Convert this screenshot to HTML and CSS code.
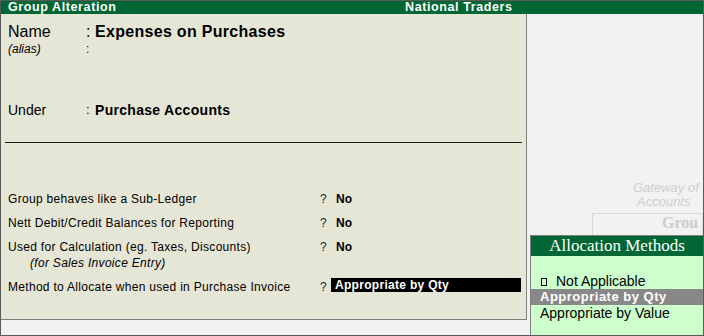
FILE: index.html
```html
<!DOCTYPE html>
<html lang="en">
<head>
  <meta charset="UTF-8" />
  <title>Group Alteration</title>
  <link rel="stylesheet" href="styles.css">
</head>
<body>
  <div class="screen">
    <!-- title bar -->
    <div class="titlebar">
      <span class="title">Group Alteration</span>
      <span class="company">National Traders</span>
    </div>

    <div class="main">
      <!-- group form -->
      <div class="form">
        <div class="field field-name">
          <span class="label">Name</span>
          <span class="colon">:</span>
          <span class="value">Expenses on Purchases</span>
        </div>
        <div class="field field-alias">
          <span class="label">(alias)</span>
          <span class="colon">:</span>
          <span class="value"></span>
        </div>
        <div class="field field-under">
          <span class="label">Under</span>
          <span class="colon">:</span>
          <span class="value">Purchase Accounts</span>
        </div>

        <div class="rule"></div>

        <div class="options">
          <div class="option">
            <span class="opt-label">Group behaves like a Sub-Ledger</span>
            <span class="q">?</span>
            <span class="opt-value">No</span>
          </div>
          <div class="option">
            <span class="opt-label">Nett Debit/Credit Balances for Reporting</span>
            <span class="q">?</span>
            <span class="opt-value">No</span>
          </div>
          <div class="option">
            <span class="opt-label">Used for Calculation (eg. Taxes, Discounts)
              <em class="sub">(for Sales Invoice Entry)</em>
            </span>
            <span class="q">?</span>
            <span class="opt-value">No</span>
          </div>
          <div class="option">
            <span class="opt-label">Method to Allocate when used in Purchase Invoice</span>
            <span class="q">?</span>
            <span class="opt-value active">Appropriate by Qty</span>
          </div>
        </div>
      </div>

      <!-- faded screen behind -->
      <div class="side">
        <div class="ghost ghost-1">Gateway of</div>
        <div class="ghost ghost-2">Accounts</div>
        <div class="ghost-box">Grou</div>
      </div>
    </div>

    <div class="bottom-strip"></div>

    <!-- allocation list popup -->
    <div class="popup">
      <div class="popup-head">Allocation Methods</div>
      <div class="popup-list">
        <div class="item"><span class="box"></span>Not Applicable</div>
        <div class="item selected">Appropriate by Qty</div>
        <div class="item">Appropriate by Value</div>
      </div>
    </div>
  </div>
</body>
</html>
```

FILE: styles.css
```css
/* ===== Tally style screen ===== */
body {
  margin: 0;
  padding: 0;
  font-family: "Liberation Sans", Arial, sans-serif;
  color: #000;
  background-color: #f2f2f2;
}

.screen {
  position: relative;
  width: 704px;
  height: 336px;
  box-sizing: border-box;
  border: 1px solid #5a5a5a;
  background-color: #f2f2f2;
  overflow: hidden;
}

/* title bar */
.titlebar {
  display: flex;
  height: 13px;
  background-color: #006633;
  color: #fff;
  font-weight: bold;
  font-size: 12.5px;
  line-height: 13px;
  letter-spacing: 0.6px;
  white-space: nowrap;
}
.title {
  padding-left: 7px;
  width: 397px;
}

.main {
  display: flex;
  height: 298px;
}

/* form panel */
.form {
  width: 525px;
  height: 297px;
  background-color: #e6e6d6;
  border-right: 1px solid #808080;
  border-bottom: 1px solid #808080;
  padding-top: 8px;
  box-sizing: content-box;
}

.field {
  display: grid;
  grid-template-columns: 78px 9px auto;
  padding-left: 7px;
}
.field .value {
  font-weight: bold;
}
.field-name {
  font-size: 16px;
  line-height: 19px;
}
.field-name .value {
  letter-spacing: 0.3px;
}
.field-alias {
  margin-top: 1px;
  font-size: 12px;
  line-height: 15px;
}
.field-alias .label {
  font-style: italic;
}
.field-under {
  margin-top: 45px;
  font-size: 13px;
  line-height: 16px;
}
.field-under .label {
  font-size: 14px;
}
.field-under .value {
  font-size: 14px;
  letter-spacing: 0.3px;
}

.rule {
  margin: 24px 0 0 4px;
  width: 517px;
  height: 1px;
  background-color: #1a1a1a;
}

.options {
  margin-top: 48px;
  font-size: 12px;
  line-height: 16px;
  letter-spacing: 0.3px;
}
.option {
  display: grid;
  grid-template-columns: 312px 11px 190px;
  padding-left: 7px;
  margin-bottom: 8px;
}
.opt-label .sub {
  display: block;
  padding-left: 22px;
}
.q {
  color: #222;
}
.opt-value {
  font-weight: bold;
  padding-left: 5px;
  letter-spacing: 0;
}
.opt-value.active {
  background-color: #000;
  color: #fff;
  height: 14px;
  line-height: 14px;
  margin-top: -1px;
  padding-left: 4px;
  letter-spacing: 0.3px;
}

/* faded screen behind the form */
.side {
  flex: 1;
  padding-top: 167px;
  overflow: hidden;
  white-space: nowrap;
}
.ghost {
  font-size: 13px;
  font-style: italic;
  line-height: 14px;
  color: #cfcfcf;
}
.ghost-1 { margin-left: 106px; }
.ghost-2 { margin-left: 110px; }
.ghost-box {
  margin: 4px 0 0 65px;
  height: 60px;
  border: 1px solid #d9d9d9;
  padding-left: 69px;
  font-family: "Liberation Serif", serif;
  font-weight: bold;
  font-size: 16px;
  line-height: 17px;
  color: #cccccc;
}

.bottom-strip {
  height: 23px;
}

/* popup list */
.popup {
  position: absolute;
  left: 529px;
  top: 234px;
  width: 174px;
  height: 101px;
  box-sizing: border-box;
  border: 1px solid #808080;
  background-color: #ccffcc;
}
.popup-head {
  height: 20px;
  background-color: #006633;
  color: #fff;
  text-align: center;
  font-family: "Liberation Serif", serif;
  font-size: 17px;
  line-height: 20px;
}
.popup-list {
  padding-top: 17px;
  font-size: 14px;
  line-height: 16px;
}
.item {
  padding-left: 9px;
  white-space: nowrap;
}
.item.selected {
  background-color: #888;
  color: #fff;
  font-weight: bold;
  font-size: 13px;
  letter-spacing: 0.5px;
}
.box {
  display: inline-block;
  width: 4px;
  height: 6px;
  border: 1px solid #000;
  margin: 0 9px 0 1px;
}
```
